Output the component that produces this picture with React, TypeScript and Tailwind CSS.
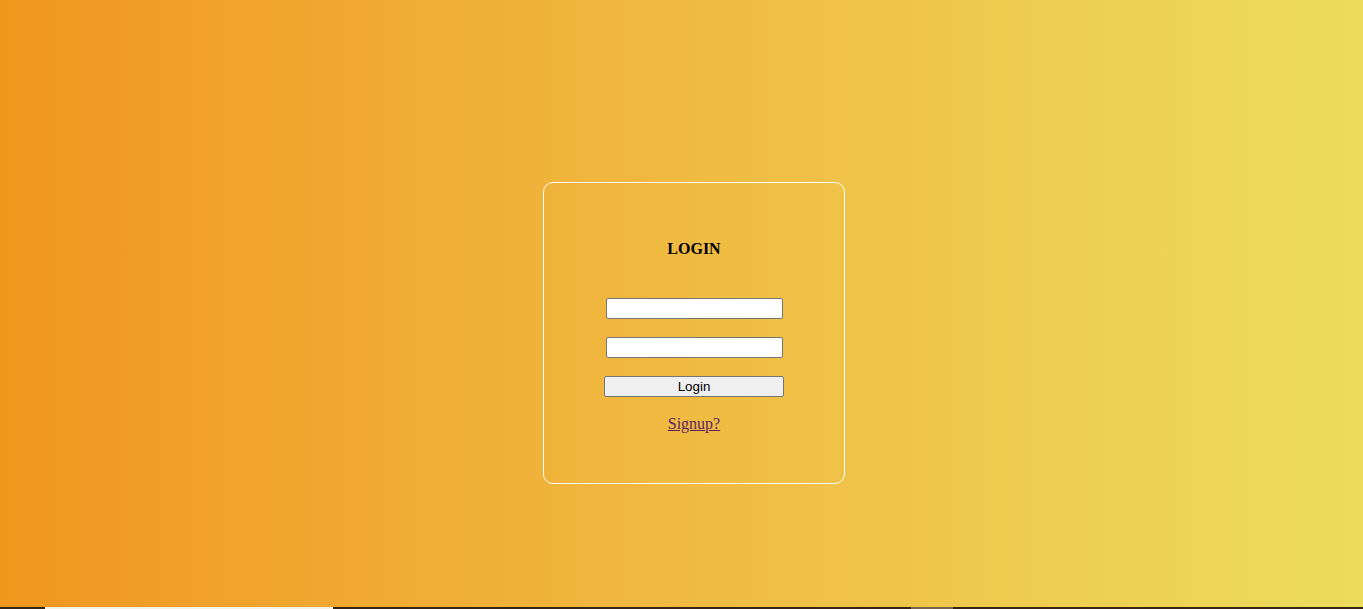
export default function App() {
  return (
    <div className="flex h-[609px] w-full flex-col overflow-hidden">
      <div className="flex h-[607px] w-full justify-center bg-gradient-to-r from-[#f0961d] to-[#ecdd5c] pl-[25px] pt-[182px]">
        <div className="flex h-[302px] w-[302px] flex-col items-center rounded-[10px] border border-white font-['Liberation_Serif',serif]">
          <h4 className="mt-[57px] text-[16px] font-bold leading-[18px] text-black">LOGIN</h4>
          <input
            type="text"
            className="mt-[40px] h-[21px] w-[177px] rounded-[2px] border border-[#767676] bg-white px-[2px] font-['Liberation_Sans',sans-serif] text-[13.33px] outline-none"
          />
          <input
            type="password"
            className="mt-[18px] h-[21px] w-[177px] rounded-[2px] border border-[#767676] bg-white px-[2px] font-['Liberation_Sans',sans-serif] text-[13.33px] outline-none"
          />
          <button className="mt-[18px] h-[21px] w-[180px] rounded-[2px] border border-[#767676] bg-[#efefef] font-['Liberation_Sans',sans-serif] text-[13.33px] leading-[19px] text-black">
            Login
          </button>
          <a href="#" className="mt-[18px] text-[16px] leading-[18px] text-[#5e1f66] underline">
            Signup?
          </a>
        </div>
      </div>
      <div className="flex h-[2px] w-full">
        <div className="w-[45px] bg-[#3b2510]" />
        <div className="w-[288px] bg-[#f6efe4]" />
        <div className="w-[578px] bg-[#3b2510]" />
        <div className="w-[42px] bg-[#7a6446]" />
        <div className="flex-1 bg-[#3b2510]" />
      </div>
    </div>
  );
}
